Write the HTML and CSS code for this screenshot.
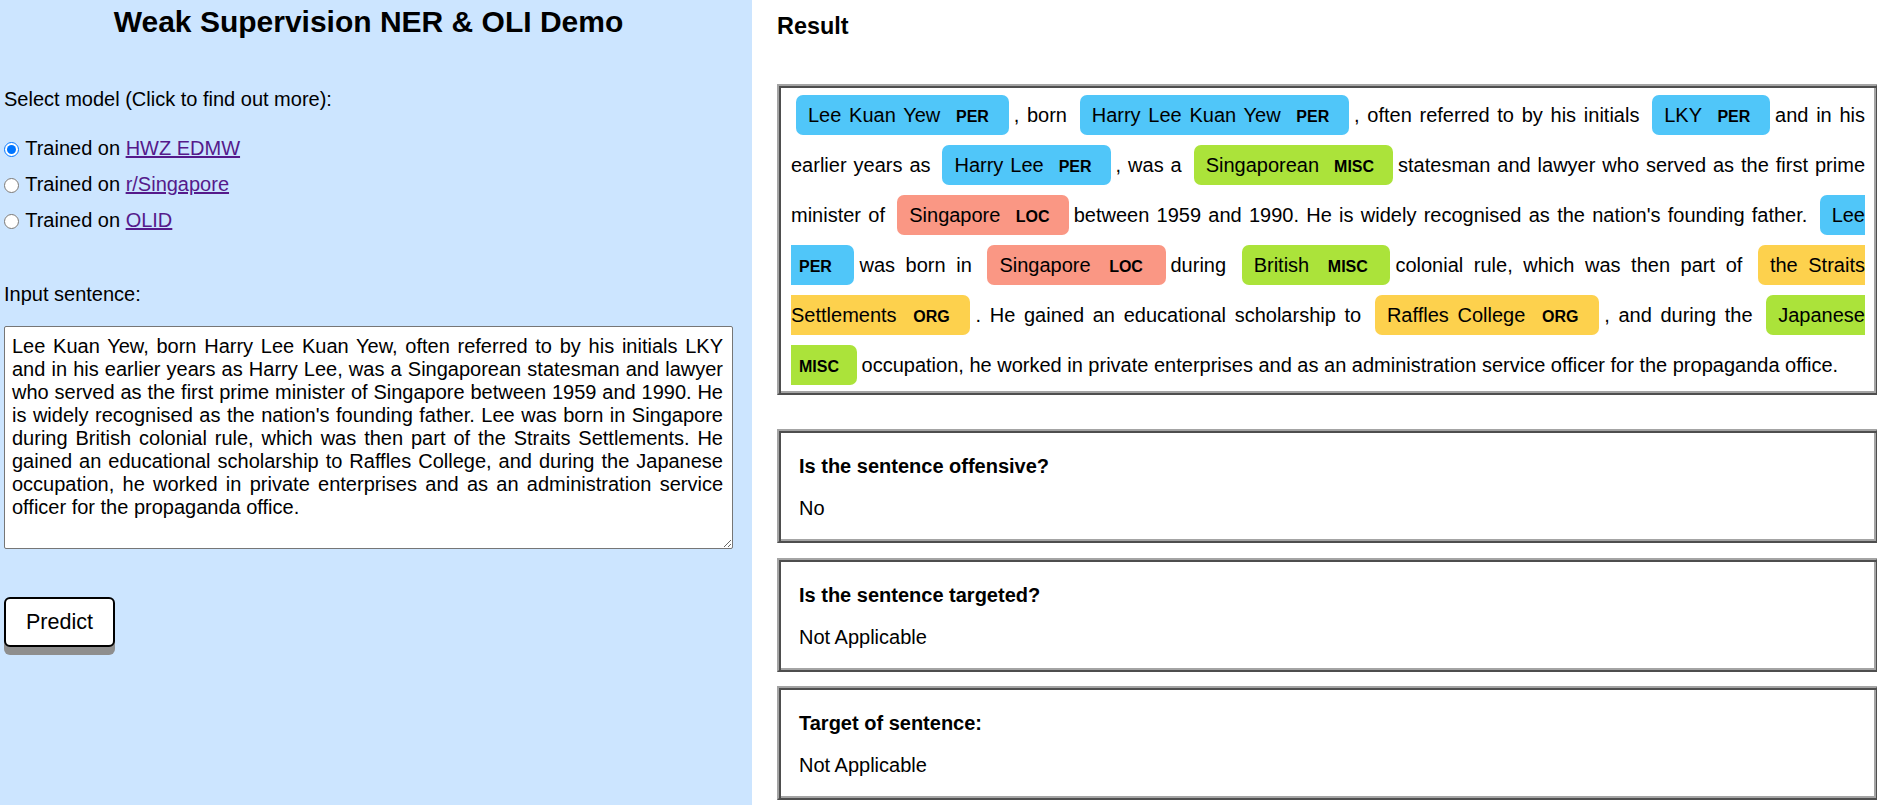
FILE: index.html
```html
<!DOCTYPE html>
<html lang="en">
<head>
<meta charset="utf-8">
<title>Weak Supervision NER &amp; OLI Demo</title>
<link rel="stylesheet" href="styles.css">
</head>
<body>
<div class="page">
  <div class="left">
    <h1 class="title">Weak Supervision NER &amp; OLI Demo</h1>
    <p class="field-label">Select model (Click to find out more):</p>
    <div class="options">
      <div class="opt"><input type="radio" name="model" checked> Trained on <a href="#" class="link">HWZ EDMW</a></div>
      <div class="opt"><input type="radio" name="model"> Trained on <a href="#" class="link">r/Singapore</a></div>
      <div class="opt"><input type="radio" name="model"> Trained on <a href="#" class="link">OLID</a></div>
    </div>
    <p class="input-label">Input sentence:</p>
    <textarea class="sentence">Lee Kuan Yew, born Harry Lee Kuan Yew, often referred to by his initials LKY and in his earlier years as Harry Lee, was a Singaporean statesman and lawyer who served as the first prime minister of Singapore between 1959 and 1990. He is widely recognised as the nation's founding father. Lee was born in Singapore during British colonial rule, which was then part of the Straits Settlements. He gained an educational scholarship to Raffles College, and during the Japanese occupation, he worked in private enterprises and as an administration service officer for the propaganda office.</textarea>
    <button class="predict" type="button">Predict</button>
  </div>
  <div class="right">
    <h3 class="result-title">Result</h3>
    <div class="box box-ents">
<div class="entities">
<mark class="ent per">
Lee Kuan Yew
<span class="lbl">PER</span>
</mark>
, born
<mark class="ent per">
Harry Lee Kuan Yew
<span class="lbl">PER</span>
</mark>
, often referred to by his initials
<mark class="ent per">
LKY
<span class="lbl">PER</span>
</mark>
and in his earlier years as
<mark class="ent per">
Harry Lee
<span class="lbl">PER</span>
</mark>
, was a
<mark class="ent misc">
Singaporean
<span class="lbl">MISC</span>
</mark>
statesman and lawyer who served as the first prime minister of
<mark class="ent loc">
Singapore
<span class="lbl">LOC</span>
</mark>
between 1959 and 1990. He is widely recognised as the nation's founding father.
<mark class="ent per">
Lee
<span class="lbl">PER</span>
</mark>
was born in
<mark class="ent loc">
Singapore
<span class="lbl">LOC</span>
</mark>
during
<mark class="ent misc">
British
<span class="lbl">MISC</span>
</mark>
colonial rule, which was then part of
<mark class="ent org">
the Straits Settlements
<span class="lbl">ORG</span>
</mark>
. He gained an educational scholarship to
<mark class="ent org">
Raffles College
<span class="lbl">ORG</span>
</mark>
, and during the
<mark class="ent misc">
Japanese
<span class="lbl">MISC</span>
</mark>
occupation, he worked in private enterprises and as an administration service officer for the propaganda office.
</div>
    </div>
    <div class="box box-info box-first">
      <h4 class="info-title">Is the sentence offensive?</h4>
      <p class="info-value">No</p>
    </div>
    <div class="box box-info">
      <h4 class="info-title">Is the sentence targeted?</h4>
      <p class="info-value">Not Applicable</p>
    </div>
    <div class="box box-info">
      <h4 class="info-title">Target of sentence:</h4>
      <p class="info-value">Not Applicable</p>
    </div>
  </div>
</div>
</body>
</html>
```

FILE: styles.css
```css
html, body {
  margin: 0;
  padding: 0;
  overflow: hidden;
}

body {
  font-family: "Liberation Sans", Arial, sans-serif;
  font-size: 20px;
  line-height: 23px;
  color: #000;
  background: #fff;
}

.page {
  display: flex;
  min-height: 805px;
}

/* ---------- left column ---------- */
.left {
  flex: none;
  width: 752px;
  box-sizing: border-box;
  padding: 0 19px 0 4px;
  background: #cce5ff;
}

.title {
  font-size: 30px;
  line-height: 34px;
  font-weight: bold;
  text-align: center;
  margin: 5px 0 0;
}

.field-label {
  margin: 49px 0 0;
}

.options {
  margin-top: 26px;
}

.opt {
  height: 23px;
}

.opt + .opt {
  margin-top: 13px;
}

.opt input {
  width: 15px;
  height: 15px;
  margin: 0 1px 0 0;
  vertical-align: -2px;
}

.link {
  color: #551a8b;
  text-decoration: underline;
}

.input-label {
  margin: 51px 0 0;
}

.sentence {
  display: block;
  width: 100%;
  height: 223px;
  box-sizing: border-box;
  margin: 20px 0 0;
  padding: 8px 9px 5px 7px;
  border: 1px solid #767676;
  border-radius: 2px;
  font-family: "Liberation Sans", Arial, sans-serif;
  font-size: 20px;
  line-height: 23px;
  color: #000;
  background: #fff;
  text-align: justify;
}

.predict {
  display: block;
  margin: 48px 0 0;
  width: 111px;
  height: 50px;
  box-sizing: border-box;
  border: 2px solid #000;
  border-radius: 6px;
  background: #fff;
  box-shadow: 0 8px 0 #8e8e8e;
  font-family: "Liberation Sans", Arial, sans-serif;
  font-size: 21.5px;
  color: #000;
  padding: 0;
}

/* ---------- right column ---------- */
.right {
  flex: 1;
  min-width: 0;
  padding-left: 25px;
}

.result-title {
  font-size: 23.4px;
  line-height: 27px;
  font-weight: bold;
  margin: 13px 0 44px;
}

.box {
  border: 2px solid;
  border-color: #a4a4a4 #4e4e4e #4e4e4e #a4a4a4;
  box-shadow: inset 2px 2px 0 #4e4e4e, inset -2px -2px 0 #a4a4a4;
  margin-right: -1px;
  background: #fff;
}

.entities {
  padding: 4px 11px 3px 12px;
  line-height: 50px;
  text-align: justify;
  direction: ltr;
}

.ent {
  padding: 0.45em 0.6em;
  margin: 0 0.25em;
  line-height: 1;
  border-radius: 0.35em;
  color: #000;
}

.per { background: #50c6f9; }
.misc { background: #abe33a; }
.loc { background: #fa9784; }
.org { background: #fdd14d; }

.lbl {
  font-size: 0.8em;
  font-weight: bold;
  line-height: 1;
  border-radius: 0.35em;
  vertical-align: middle;
  margin-left: 0.5rem;
}

.box-first {
  margin-top: 34px;
}

.box-info + .box-info {
  margin-top: 14.5px;
}

.box-info {
  padding: 24px 20px 21px 20px;
}

.info-title {
  font-size: 20px;
  line-height: 23px;
  font-weight: bold;
  margin: 0 0 19px;
}

.info-value {
  margin: 0;
}
```
